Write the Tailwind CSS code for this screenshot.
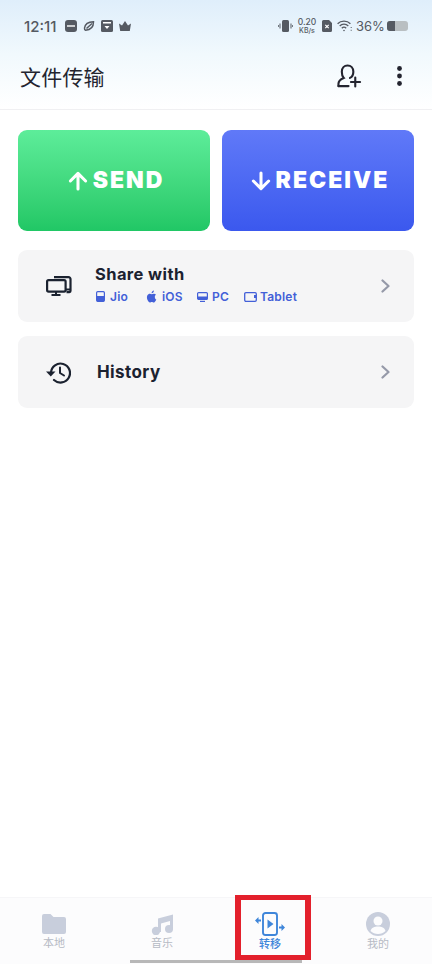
<!DOCTYPE html>
<html lang="en">
<head>
    <meta charset="UTF-8">
    <meta name="viewport" content="width=device-width, initial-scale=1.0">
    <title>文件传输</title>
    <script src="https://cdn.jsdelivr.net/npm/@tailwindcss/browser@4"></script>
</head>
<body class="bg-white font-['Inter','Noto_Sans_CJK_SC',sans-serif]">
    <div class="relative w-[432px] h-[964px] flex flex-col overflow-hidden">
        <!-- Header with status bar -->
        <div class="h-[110px] shrink-0 border-b border-[#f0f0f2] bg-gradient-to-b from-[#dfeefb] via-[#f1f9fd] to-white">
            <div class="h-[52px] pl-6 pr-6 flex items-center justify-between text-[#555a62]">
                <div class="flex items-center">
                    <span class="text-[15px] font-medium leading-none w-[36px]">12:11</span>
                    <div class="flex items-center gap-[6px] ml-[5px]">
                        <div class="w-3 h-3 rounded-[3px] bg-[#555a62] flex items-center justify-center">
                            <div class="w-2 h-[2px] bg-white/70"></div>
                        </div>
                        <svg class="w-3 h-3" viewBox="0 0 12 12" fill="none" stroke="#555a62" stroke-width="1.500"><path d="M1.500 8C2 4.500 5 2 10.500 1.800 10.500 7 7.500 10 2.500 10.300 1.700 10.200 1.400 9.300 1.500 8z"/><path d="M3.500 8.500L9 3.500"/></svg>
                        <svg class="w-3 h-3" viewBox="0 0 12 12"><rect width="12" height="12" rx="1.500" fill="#555a62"/><rect x="2" y="2" width="8" height="1.500" fill="#fff"/><path d="M3.500 6h5L6 9z" fill="#fff"/></svg>
                        <svg class="w-3 h-3" viewBox="0 0 12 12" fill="#555a62"><path d="M0 3.500l3 2L6 1l3 4.500 3-2-1.200 7.500H1.200z"/></svg>
                    </div>
                </div>
                <div class="flex items-center">
                    <svg class="w-[15px] h-3" viewBox="0 0 15 12" fill="#555a62"><rect x="4" y="0" width="7" height="12" rx="1.500"/><rect x="1.500" y="3.500" width="1" height="5"/><rect x="12.500" y="3.500" width="1" height="5"/><rect x="0" y="5" width=".8" height="2"/><rect x="14.200" y="5" width=".8" height="2"/></svg>
                    <div class="ml-[4px] w-[20px] flex flex-col items-center text-[8.500px] leading-none font-medium">
                        <span>0.20</span>
                        <span class="text-[7px]">KB/s</span>
                    </div>
                    <svg class="ml-[5px] w-[10px] h-3" viewBox="0 0 10 12"><path d="M1.500 0H7l3 3v7.500A1.500 1.500 0 0 1 8.500 12h-7A1.500 1.500 0 0 1 0 10.500v-9A1.500 1.500 0 0 1 1.500 0z" fill="#555a62"/><path d="M3.300 4.800l3.400 3.400M6.700 4.800L3.300 8.200" stroke="#fff" stroke-width="1.200"/></svg>
                    <svg class="ml-[5px] w-[15px] h-3" viewBox="0 0 15 12" fill="none" stroke="#555a62" stroke-width="1.300"><path d="M.6 3.800C4 .2 10 .2 13.400 3.800"/><path d="M2.700 6C5 3.600 9 3.600 11.300 6"/><path d="M4.800 8.200C6 7 8 7 9.200 8.200"/><circle cx="7" cy="10.500" r=".8" fill="#555a62" stroke="none"/><path d="M14.200 7v1M14.200 9.800v1" stroke-width="1"/></svg>
                    <span class="ml-[4px] text-[13px] font-normal leading-none w-[27px] whitespace-nowrap">36%</span>
                    <div class="ml-[4px] w-[21px] h-[10px] rounded-[3px] bg-[#b9bfc2] overflow-hidden">
                        <div class="w-[8px] h-full bg-[#555a62]"></div>
                    </div>
                </div>
            </div>
            <div class="h-[48px] pl-5 pr-[30px] flex items-center justify-between">
                <h1 class="text-[21px] leading-none text-[#23242f] font-['Noto_Sans_CJK_SC',sans-serif] tracking-[0.2px]">文件传输</h1>
                <div class="flex items-center gap-[35px] text-[#23242f]">
                    <svg class="w-[25px] h-[24px]" viewBox="0 0 26 25" fill="none" stroke="currentColor" stroke-width="2.200" stroke-linecap="round"><path d="M1.500 23v-2.500C1.500 17.500 4.500 15.500 7 14.500 5 12.500 5 10 5 8 5 4 7.500 1.500 11 1.500s6 2.500 6 6.500c0 3-1.500 5.500-3.500 6.500"/><path d="M1.500 23H12"/><path d="M19 14v9.500M14.500 18.800h9.500"/></svg>
                    <svg class="w-[5px] h-[20px]" viewBox="0 0 5 20" fill="currentColor"><circle cx="2.500" cy="2.500" r="2.400"/><circle cx="2.500" cy="10" r="2.400"/><circle cx="2.500" cy="17.500" r="2.400"/></svg>
                </div>
            </div>
        </div>

        <!-- Send / Receive -->
        <div class="px-[18px] pt-[20px] grid grid-cols-2 gap-3 text-white font-black text-[23px] tracking-[2px]">
            <div class="h-[101px] pl-[4px] rounded-[9px] bg-gradient-to-b from-[#5ded9a] to-[#20c765] flex items-center justify-center gap-[5px]">
                <svg class="w-[20px] h-[20px]" viewBox="0 0 21 21" fill="none" stroke="currentColor" stroke-width="3.200" stroke-linecap="round" stroke-linejoin="round"><path d="M10.500 19V2.500M2.500 10.500l8-8 8 8"/></svg>
                <span class="leading-none">SEND</span>
            </div>
            <div class="h-[101px] pl-[4px] rounded-[9px] bg-gradient-to-b from-[#6079f8] to-[#3b58ee] flex items-center justify-center gap-[5px]">
                <svg class="w-[20px] h-[20px]" viewBox="0 0 21 21" fill="none" stroke="currentColor" stroke-width="3.200" stroke-linecap="round" stroke-linejoin="round"><path d="M10.500 2v16.500M2.500 10.500l8 8 8-8"/></svg>
                <span class="leading-none">RECEIVE</span>
            </div>
        </div>

        <!-- Share with -->
        <div class="mx-[18px] mt-[19px] h-[72px] rounded-[9px] bg-[#f5f5f6] flex items-center pl-[28px] pr-[24px]">
            <svg class="w-[26px] h-[20px] shrink-0" viewBox="0 0 26 20" fill="none" stroke="#1b2230" stroke-width="2.200"><rect x="1.100" y="4.100" width="18.500" height="11.500" rx="1.500"/><path d="M8 1.100h14.500a2 2 0 0 1 2 2v12a1 1 0 0 1-1 1h-3"/><path d="M10 15.500v3M5.500 19h9" stroke-width="2"/><path d="M20 13.500h4" stroke-width="2"/></svg>
            <div class="ml-[23px] flex-1 -mt-[3px]">
                <div class="text-[16.500px] font-bold leading-none tracking-[0.4px] text-[#1b2230]">Share with</div>
                <div class="mt-[8px] flex items-center text-[#4360d8] text-[12px] font-semibold leading-none tracking-[0.2px]">
                    <svg class="ml-[1px] w-[9px] h-[11px]" viewBox="0 0 9 11"><rect x=".6" y=".6" width="7.800" height="9.800" rx="1.200" fill="none" stroke="currentColor" stroke-width="1.200"/><rect x="1" y="5" width="7" height="5.500" fill="currentColor"/></svg>
                    <span class="ml-[5px] w-[19px]">Jio</span>
                    <svg class="ml-[16px] w-[12px] h-[13px]" viewBox="0 0 12 13" fill="currentColor"><path d="M9.800 6.900c0-1.400 1.100-2 1.200-2.100-.7-1-1.700-1.100-2-1.100-.9-.1-1.700.5-2.200.5-.4 0-1.100-.5-1.900-.5C3.900 3.700 2.900 4.300 2.400 5.200c-1 1.800-.3 4.400.7 5.900.5.700 1 1.500 1.800 1.500.7 0 1-.5 1.900-.5s1.100.5 1.900.5 1.300-.7 1.800-1.500c.5-.8.8-1.600.8-1.700-.1 0-1.500-.6-1.500-2.500z"/><path d="M8.300 2.500c.4-.5.700-1.200.6-1.900-.6 0-1.300.4-1.700.9-.4.400-.7 1.100-.6 1.800.6 0 1.300-.3 1.700-.8z"/></svg>
                    <span class="ml-[5px] w-[19px]">iOS</span>
                    <svg class="ml-[16px] w-[11px] h-[10px]" viewBox="0 0 11 10"><rect x=".6" y=".6" width="9.800" height="6.800" rx="1" fill="none" stroke="currentColor" stroke-width="1.200"/><rect x="1" y="4.500" width="9" height="3" fill="currentColor"/><rect x="3" y="8.800" width="5" height="1.200" fill="currentColor"/></svg>
                    <span class="ml-[4px] w-[17px]">PC</span>
                    <svg class="ml-[15px] w-[13px] h-[10px]" viewBox="0 0 13 10" fill="none" stroke="currentColor" stroke-width="1.300"><rect x=".7" y=".7" width="11.600" height="8.600" rx="1.200"/><path d="M11 3v3" stroke-width="2"/></svg>
                    <span class="ml-[3px]">Tablet</span>
                </div>
            </div>
            <svg class="w-[9px] h-[14px] shrink-0" viewBox="0 0 9 14" fill="none" stroke="#9599a8" stroke-width="2.200" stroke-linecap="round" stroke-linejoin="round"><path d="M1.500 1.500L7.500 7l-6 5.500"/></svg>
        </div>

        <!-- History -->
        <div class="mx-[18px] mt-[14px] h-[72px] rounded-[9px] bg-[#f5f5f6] flex items-center pl-[28px] pr-[24px]">
            <svg class="w-[25px] h-[23px] shrink-0" viewBox="0 0 25 23" fill="none" stroke="#1b2230" stroke-width="2.200"><path d="M5 11.500a9.500 9.500 0 1 1 3 7.500" stroke-linecap="round"/><path d="M0 10.500h9.500L4.800 15.500z" fill="#1b2230" stroke="none"/><path d="M14 6.500v5.500l4 2.500" stroke-width="2" stroke-linecap="round" stroke-linejoin="round"/></svg>
            <div class="ml-[26px] flex-1 text-[17px] font-bold leading-none tracking-[0.4px] text-[#1b2230]">History</div>
            <svg class="w-[9px] h-[14px] shrink-0" viewBox="0 0 9 14" fill="none" stroke="#9599a8" stroke-width="2.200" stroke-linecap="round" stroke-linejoin="round"><path d="M1.500 1.500L7.500 7l-6 5.500"/></svg>
        </div>

        <!-- Bottom nav -->
        <div class="mt-auto h-[67px] bg-[#fcfcfd] border-t border-[#f6f6f8] grid grid-cols-4 font-['Noto_Sans_CJK_SC',sans-serif] text-[11px] leading-none text-[#b6bac4]">
            <div class="flex flex-col items-center pt-[16px]">
                <svg class="w-6 h-5" viewBox="0 0 24 20" fill="#c8cedc"><path d="M0 2a2 2 0 0 1 2-2h6.500l3 3H22a2 2 0 0 1 2 2v13a2 2 0 0 1-2 2H2a2 2 0 0 1-2-2z"/></svg>
                <span class="mt-[3px]">本地</span>
            </div>
            <div class="flex flex-col items-center pt-[16px]">
                <svg class="w-[23px] h-[21px]" viewBox="0 0 23 21" fill="#c8cedc"><path d="M7 4.500L22 .5v15h-3V7L10 9.500V18H7z"/><circle cx="5" cy="17" r="4.200"/><circle cx="18" cy="15" r="4"/></svg>
                <span class="mt-[2px]">音乐</span>
            </div>
            <div class="flex flex-col items-center pt-[14px] text-[#3f86da] font-medium">
                <svg class="w-[30px] h-[24px]" viewBox="0 0 30 24"><rect x="8" y="1" width="14" height="22" rx="2.500" fill="none" stroke="#3f86da" stroke-width="1.900"/><path d="M12.500 7.500l6 4.500-6 4.500z" fill="#3f86da"/><path d="M0 8.500l3.500-3.500v2.500H6v2H3.500V12zM30 15.500L26.500 12v2.500H24v2h2.500V19z" fill="#3f86da"/></svg>
                <span class="mt-[2px]">转移</span>
            </div>
            <div class="flex flex-col items-center pt-[14px]">
                <svg class="w-6 h-6" viewBox="0 0 24 24"><circle cx="12" cy="12" r="12" fill="#c8cedc"/><circle cx="12" cy="9" r="4.500" fill="#fcfcfd"/><path d="M4.500 19c1-3.500 4-4.500 7.500-4.500s6.500 1 7.500 4.500c-2 2-4.500 3-7.500 3s-5.500-1-7.500-3z" fill="#fcfcfd"/></svg>
                <span class="mt-[2px]">我的</span>
            </div>
        </div>

        <!-- Gesture bar and highlight box sit over the nav -->
        <div class="absolute left-[130px] top-[960px] w-[172px] h-[3px] bg-[#b8b8b8]"></div>
        <div class="absolute left-[235px] top-[895px] w-[76px] h-[65px] border-x-[6px] border-y-[5px] border-[#e3202c]"></div>
    </div>
</body>
</html>
